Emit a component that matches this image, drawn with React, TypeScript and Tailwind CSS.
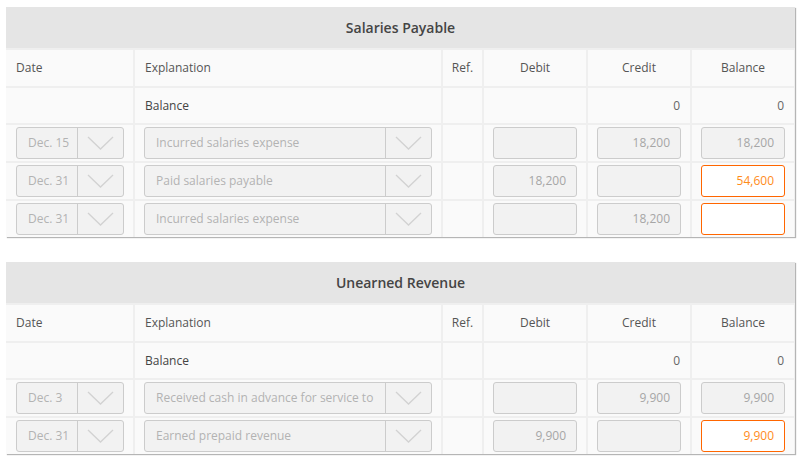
import React from 'react';

type Row = {
  date: string;
  explanation: string;
  debit?: string;
  credit?: string;
  balance?: string;
  balanceState: 'plain' | 'error';
};

interface LedgerProps {
  title: string;
  rows: Row[];
}

const Chevron: React.FC = () => (
  <svg width="27" height="14" viewBox="0 0 27 14" fill="none">
    <path d="M1 1 L13.5 13 L26 1" stroke="#d2d2d2" strokeWidth="1.3" />
  </svg>
);

const SelectBox: React.FC<{ value: string; width: string; arrowWidth: string }> = ({ value, width, arrowWidth }) => (
  <div className={`flex h-[32px] ${width} items-stretch rounded-[3px] border border-[#cccccc] bg-[#f2f2f2]`}>
    <div className="flex min-w-0 flex-1 items-center overflow-hidden whitespace-nowrap px-[11px] text-[12px] text-[#b3b3b3]">{value}</div>
    <div className={`flex ${arrowWidth} shrink-0 items-center justify-center border-l border-[#cccccc]`}>
      <Chevron />
    </div>
  </div>
);

const Amount: React.FC<{ value?: string; error?: boolean }> = ({ value, error }) => (
  <div
    className={
      error
        ? 'flex h-[32px] w-[84px] items-center justify-end rounded-[3px] border border-[#ff6600] bg-white px-[10px] text-[12px] text-[#ff8c1a]'
        : 'flex h-[32px] w-[84px] items-center justify-end rounded-[3px] border border-[#cccccc] bg-[#f2f2f2] px-[10px] text-[12px] text-[#a6a6a6]'
    }
  >
    {value}
  </div>
);

const Ledger: React.FC<LedgerProps> = ({ title, rows }) => {
  return (
    <div className="w-[789px] bg-[#efefef] shadow-[1px_1px_1px_#b5b5b5]">
      <div className="flex h-[41px] items-center justify-center bg-[#e5e5e5] text-[14px] font-semibold text-[#444444]">
        {title}
      </div>
      <div className="mt-[2px] grid grid-cols-[127px_306px_39px_102px_102px_102px] gap-[2px] text-[12px] text-[#555555]">
        <div className="flex h-[36px] items-center bg-[#fafafa] px-[10px]">Date</div>
        <div className="flex items-center bg-[#fafafa] px-[10px]">Explanation</div>
        <div className="flex items-center justify-center bg-[#fafafa]">Ref.</div>
        <div className="flex items-center justify-center bg-[#fafafa]">Debit</div>
        <div className="flex items-center justify-center bg-[#fafafa]">Credit</div>
        <div className="flex items-center justify-center bg-[#fafafa]">Balance</div>

        <div className="h-[35px] bg-[#fafafa]" />
        <div className="flex items-center bg-[#fafafa] px-[10px] text-[#444444]">Balance</div>
        <div className="bg-[#fafafa]" />
        <div className="bg-[#fafafa]" />
        <div className="flex items-center justify-end bg-[#fafafa] px-[10px] text-[#666666]">0</div>
        <div className="flex items-center justify-end bg-[#fafafa] px-[10px] text-[#666666]">0</div>

        {rows.map((r, i) => (
          <React.Fragment key={i}>
            <div className="flex h-[36px] items-center bg-[#fafafa] pl-[10px]">
              <SelectBox value={r.date} width="w-[108px]" arrowWidth="w-[46px]" />
            </div>
            <div className="flex items-center bg-[#fafafa] pl-[9px]">
              <SelectBox value={r.explanation} width="w-[288px]" arrowWidth="w-[46px]" />
            </div>
            <div className="bg-[#fafafa]" />
            <div className="flex items-center bg-[#fafafa] pl-[9px]">
              <Amount value={r.debit} />
            </div>
            <div className="flex items-center bg-[#fafafa] pl-[9px]">
              <Amount value={r.credit} />
            </div>
            <div className="flex items-center bg-[#fafafa] pl-[9px]">
              <Amount value={r.balance} error={r.balanceState === 'error'} />
            </div>
          </React.Fragment>
        ))}
      </div>
    </div>
  );
};

const salaries: Row[] = [
  { date: 'Dec. 15', explanation: 'Incurred salaries expense', credit: '18,200', balance: '18,200', balanceState: 'plain' },
  { date: 'Dec. 31', explanation: 'Paid salaries payable', debit: '18,200', balance: '54,600', balanceState: 'error' },
  { date: 'Dec. 31', explanation: 'Incurred salaries expense', credit: '18,200', balance: '', balanceState: 'error' },
];

const unearned: Row[] = [
  { date: 'Dec. 3', explanation: 'Received cash in advance for service to', credit: '9,900', balance: '9,900', balanceState: 'plain' },
  { date: 'Dec. 31', explanation: 'Earned prepaid revenue', debit: '9,900', balance: '9,900', balanceState: 'error' },
];

export default function App() {
  return (
    <div className="min-h-screen bg-white pl-[6px] pt-[7px] font-['Open_Sans',sans-serif]">
      <Ledger title="Salaries Payable" rows={salaries} />
      <div className="h-[25px]" />
      <Ledger title="Unearned Revenue" rows={unearned} />
    </div>
  );
}
